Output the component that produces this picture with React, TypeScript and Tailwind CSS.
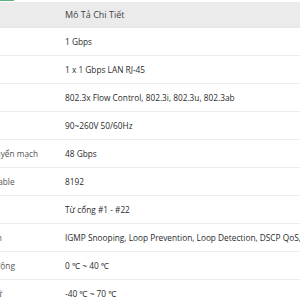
import React from "react";

const rows: [string, string][] = [
  ["Tốc độ", "1 Gbps"],
  ["Cổng kết nối", "1 x 1 Gbps LAN RJ-45"],
  ["Tiêu chuẩn", "802.3x Flow Control, 802.3i, 802.3u, 802.3ab"],
  ["Nguồn điện", "90~260V 50/60Hz"],
  ["Băng thông chuyển mạch", "48 Gbps"],
  ["MAC Address Table", "8192"],
  ["Cổng PoE", "Từ cổng #1 - #22"],
  ["Tính năng chính", "IGMP Snooping, Loop Prevention, Loop Detection, DSCP QoS, 802.1p QoS"],
  ["Nhiệt độ hoạt động", "0 ℃ ~ 40 ℃"],
  ["Nhiệt độ lưu trữ", "-40 ℃ ~ 70 ℃"],
];

export default function App() {
  return (
    <div
      className="w-[300px] h-[300px] overflow-hidden bg-white text-[#2a2a2a]"
      style={{ fontFamily: '"Open Sans", "Noto Sans", sans-serif' }}
    >
      <div className="h-[1px] w-[14px] bg-[#5fae85]" />
      <div className="ml-[-72px] w-[600px] mt-[1px]">
        <div className="flex h-[26px] items-center pt-[1px] bg-[#ebebeb] border-b border-[#e6e6e6] text-[9px] text-[#444]">
          <div className="w-[125px] pl-3 whitespace-nowrap">Thông Số</div>
          <div className="pl-3 whitespace-nowrap">Mô Tả Chi Tiết</div>
        </div>
        {rows.map(([k, v]) => (
          <div key={k} className="flex h-[28px] items-center pt-[2px] border-b border-[#ececec] text-[8.3px]">
            <div className="w-[125px] pl-3 whitespace-nowrap text-[#555]">{k}</div>
            <div className="pl-3 whitespace-nowrap">{v}</div>
          </div>
        ))}
      </div>
    </div>
  );
}
